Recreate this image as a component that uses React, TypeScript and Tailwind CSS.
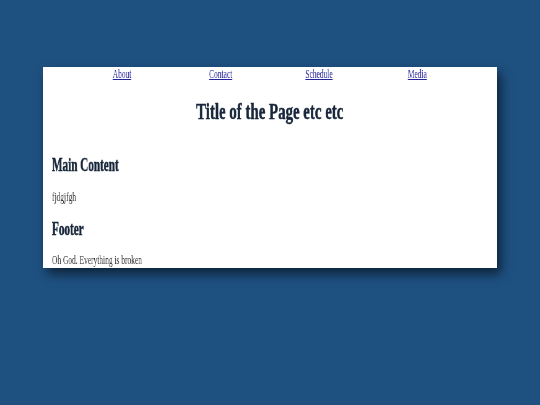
import React from "react";

function S({ children, center, heavy }: { children: React.ReactNode; center?: boolean; heavy?: boolean }) {
  return (
    <span
      className={
        "inline-block whitespace-nowrap scale-x-[0.62] [will-change:transform] " +
        (center ? "origin-center " : "origin-left ") +
        (heavy ? "[-webkit-text-stroke:0.5px_#17263a]" : "")
      }
    >
      {children}
    </span>
  );
}

export default function App() {
  const links = ["About", "Contact", "Schedule", "Media"];
  return (
    <div className="min-h-screen w-full bg-[#1e5080] pt-[67px] font-['Liberation_Serif','Times_New_Roman',serif]">
      <div className="ml-[43px] w-[454px] h-[201px] bg-white shadow-[4px_6px_10px_rgba(0,0,0,0.55)] overflow-hidden">
        <nav className="ml-[30px] w-[393px] grid grid-cols-4 text-[12px] leading-[14px]">
          {links.map((l) => (
            <div key={l} className="text-center">
              <S center>
                <a href="#" className="text-[#24249a] underline">
                  {l}
                </a>
              </S>
            </div>
          ))}
        </nav>
        <h1 className="text-center text-[24px] leading-[28px] font-bold text-[#17263a] mt-[16px]">
          <S center heavy>Title of the Page etc etc</S>
        </h1>
        <div className="px-[9px]">
          <h2 className="text-[18px] leading-[22px] font-bold text-[#17263a] mt-[29px]">
            <S heavy>Main Content</S>
          </h2>
          <p className="text-[12px] leading-[14px] text-[#333333] mt-[14px]">
            <S>fjdgjfgh</S>
          </p>
          <h2 className="text-[18px] leading-[22px] font-bold text-[#17263a] mt-[14px]">
            <S heavy>Footer</S>
          </h2>
          <p className="text-[12px] leading-[14px] text-[#333333] mt-[13px]">
            <S>Oh God. Everything is broken</S>
          </p>
        </div>
      </div>
    </div>
  );
}
